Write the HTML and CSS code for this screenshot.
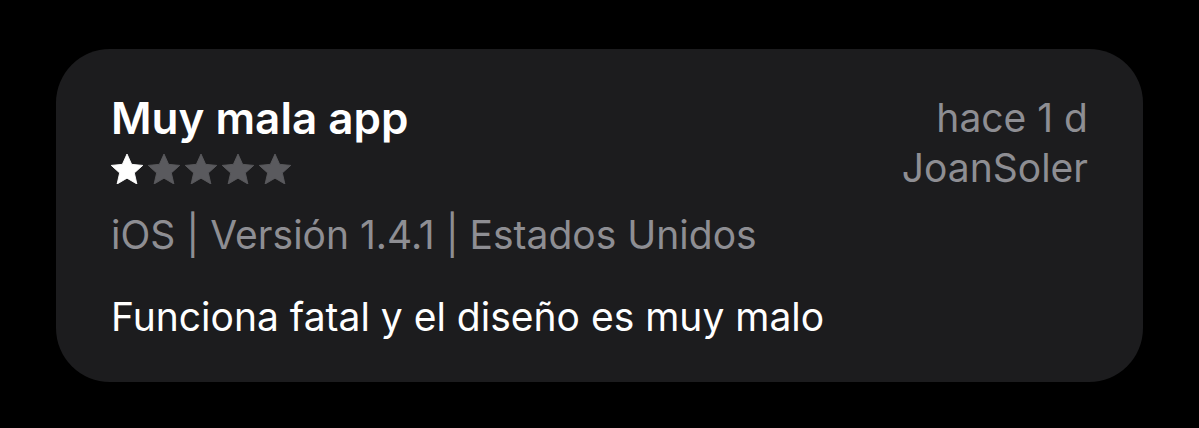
FILE: index.html
```html
<!DOCTYPE html>
<html lang="es">
<head>
  <meta charset="UTF-8">
  <title>Reseña</title>
  <link rel="stylesheet" href="styles.css">
</head>
<body>
  <div class="review-card">
    <div class="review-head">
      <div class="head-left">
        <h2 class="review-title">Muy mala app</h2>
        <div class="stars">
          <svg class="star on" viewBox="1.5 1.8 21 20"><path d="M12 1.8l3.1 6.9 7.4.7-5.6 5 1.7 7.4L12 17.9l-6.6 3.9 1.7-7.4-5.6-5 7.4-.7z"/></svg>
          <svg class="star" viewBox="1.5 1.8 21 20"><path d="M12 1.8l3.1 6.9 7.4.7-5.6 5 1.7 7.4L12 17.9l-6.6 3.9 1.7-7.4-5.6-5 7.4-.7z"/></svg>
          <svg class="star" viewBox="1.5 1.8 21 20"><path d="M12 1.8l3.1 6.9 7.4.7-5.6 5 1.7 7.4L12 17.9l-6.6 3.9 1.7-7.4-5.6-5 7.4-.7z"/></svg>
          <svg class="star" viewBox="1.5 1.8 21 20"><path d="M12 1.8l3.1 6.9 7.4.7-5.6 5 1.7 7.4L12 17.9l-6.6 3.9 1.7-7.4-5.6-5 7.4-.7z"/></svg>
          <svg class="star" viewBox="1.5 1.8 21 20"><path d="M12 1.8l3.1 6.9 7.4.7-5.6 5 1.7 7.4L12 17.9l-6.6 3.9 1.7-7.4-5.6-5 7.4-.7z"/></svg>
        </div>
      </div>
      <div class="head-right">
        <span class="review-date">hace 1 d</span>
        <span class="review-author">JoanSoler</span>
      </div>
    </div>
    <p class="review-meta">iOS | Versión 1.4.1 | Estados Unidos</p>
    <p class="review-body">Funciona fatal y el diseño es muy malo</p>
  </div>
</body>
</html>
```

FILE: styles.css
```css
* { margin: 0; padding: 0; box-sizing: border-box; }
body {
  background: #000;
  font-family: Inter, "Noto Sans", sans-serif;
  padding: 49px 56px 0 56px;
  width: 1199px;
}
.review-card {
  background: #1c1c1e;
  width: 1087px;
  height: 333px;
  border-radius: 54px;
  padding: 45px 55px 0 55px;
}
.review-head {
  display: flex;
  justify-content: space-between;
}
.review-title {
  font-size: 44px;
  font-weight: 600;
  color: #fff;
  line-height: 48px;
}
.stars {
  display: flex;
  gap: 5px;
  margin-top: 12px;
}
.star {
  width: 32px;
  height: 30px;
  fill: #5a5a5e;
  stroke: #5a5a5e;
  stroke-width: 0.6;
  stroke-linejoin: round;
}
.star.on { fill: #fff; stroke: #fff; }
.head-right {
  display: flex;
  flex-direction: column;
  align-items: flex-end;
  color: #8e8e93;
  font-size: 39px;
  line-height: 50px;
  margin-top: -1px;
}
.review-meta {
  color: #8e8e93;
  font-size: 39px;
  line-height: 47px;
  margin-top: 18px;
}
.review-body {
  color: #fff;
  font-size: 39px;
  line-height: 47px;
  margin-top: 35px;
}
```
